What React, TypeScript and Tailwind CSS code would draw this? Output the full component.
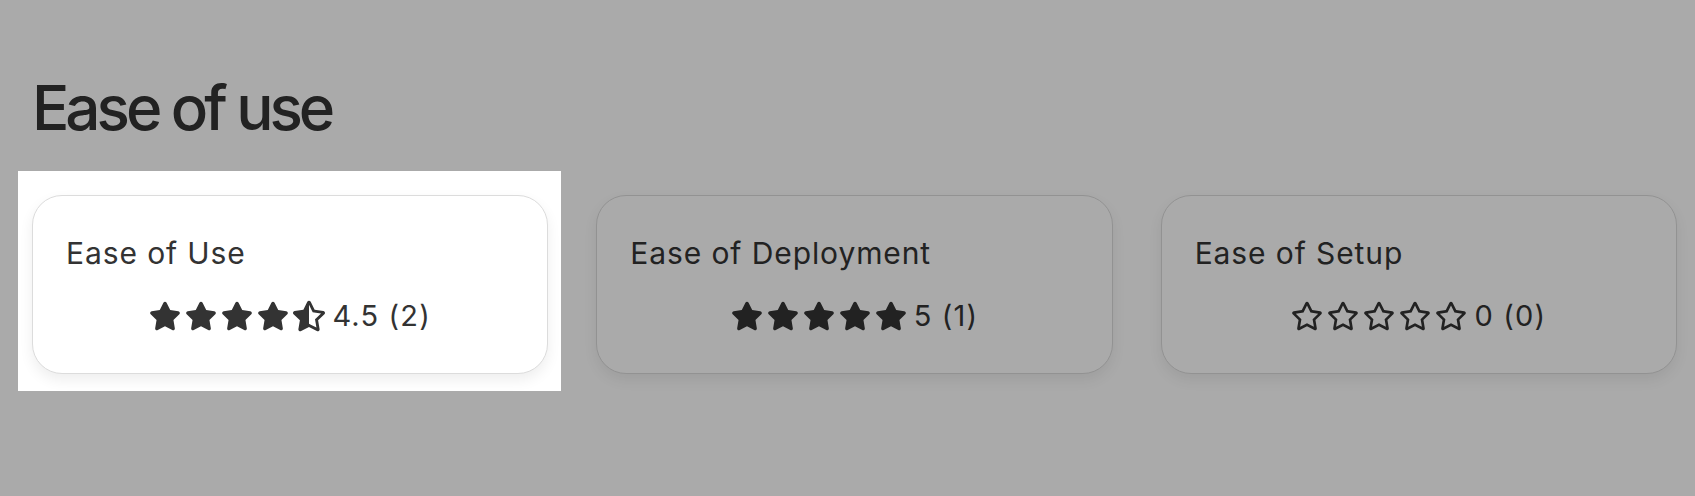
import { FaStar, FaRegStar, FaStarHalfAlt } from "react-icons/fa";

type Rating = {
  label: string;
  score: number;
  count: number;
  highlighted?: boolean;
};

const ratings: Rating[] = [
  { label: "Ease of Use", score: 4.5, count: 2, highlighted: true },
  { label: "Ease of Deployment", score: 5, count: 1 },
  { label: "Ease of Setup", score: 0, count: 0 },
];

function Stars({ score }: { score: number }) {
  return (
    <div className="flex items-center gap-[4px] text-[#333333]">
      {[1, 2, 3, 4, 5].map((i) => {
        if (score >= i) return <FaStar key={i} size={32} />;
        if (score >= i - 0.5) return <FaStarHalfAlt key={i} size={32} />;
        return <FaRegStar key={i} size={32} />;
      })}
    </div>
  );
}

function RatingCard({ rating }: { rating: Rating }) {
  return (
    <div className="relative">
      <div className="h-[179px] rounded-[30px] border border-[#dcdcdc] bg-white px-[33px] pt-[39px] shadow-[0_6px_14px_rgba(0,0,0,0.07)]">
        <div className="text-[30px] leading-[36px] tracking-[0.03em] text-[#333333]">
          {rating.label}
        </div>
        <div className="mt-[28px] flex items-center justify-center gap-[7px]">
          <Stars score={rating.score} />
          <span className="text-[29px] leading-[34px] tracking-[0.04em] text-[#333333]">
            {rating.score} ({rating.count})
          </span>
        </div>
      </div>
      {/* spotlight: darkens everything around the highlighted card */}
      {rating.highlighted && (
        <div className="pointer-events-none absolute -left-[14px] -top-[24px] -right-[13px] -bottom-[17px] z-10 shadow-[0_0_0_9999px_rgba(0,0,0,0.333)]" />
      )}
    </div>
  );
}

export default function App() {
  return (
    <div className="min-h-screen overflow-hidden bg-white font-['Inter',sans-serif]">
      <div className="pl-8 pr-[18px] pt-[77px]">
        <h1 className="text-[62px] font-medium leading-[62px] tracking-[-0.065em] text-[#333333]">
          Ease of use
        </h1>
        <div className="mt-[56px] grid grid-cols-3 gap-12">
          {ratings.map((r) => (
            <RatingCard key={r.label} rating={r} />
          ))}
        </div>
      </div>
    </div>
  );
}
